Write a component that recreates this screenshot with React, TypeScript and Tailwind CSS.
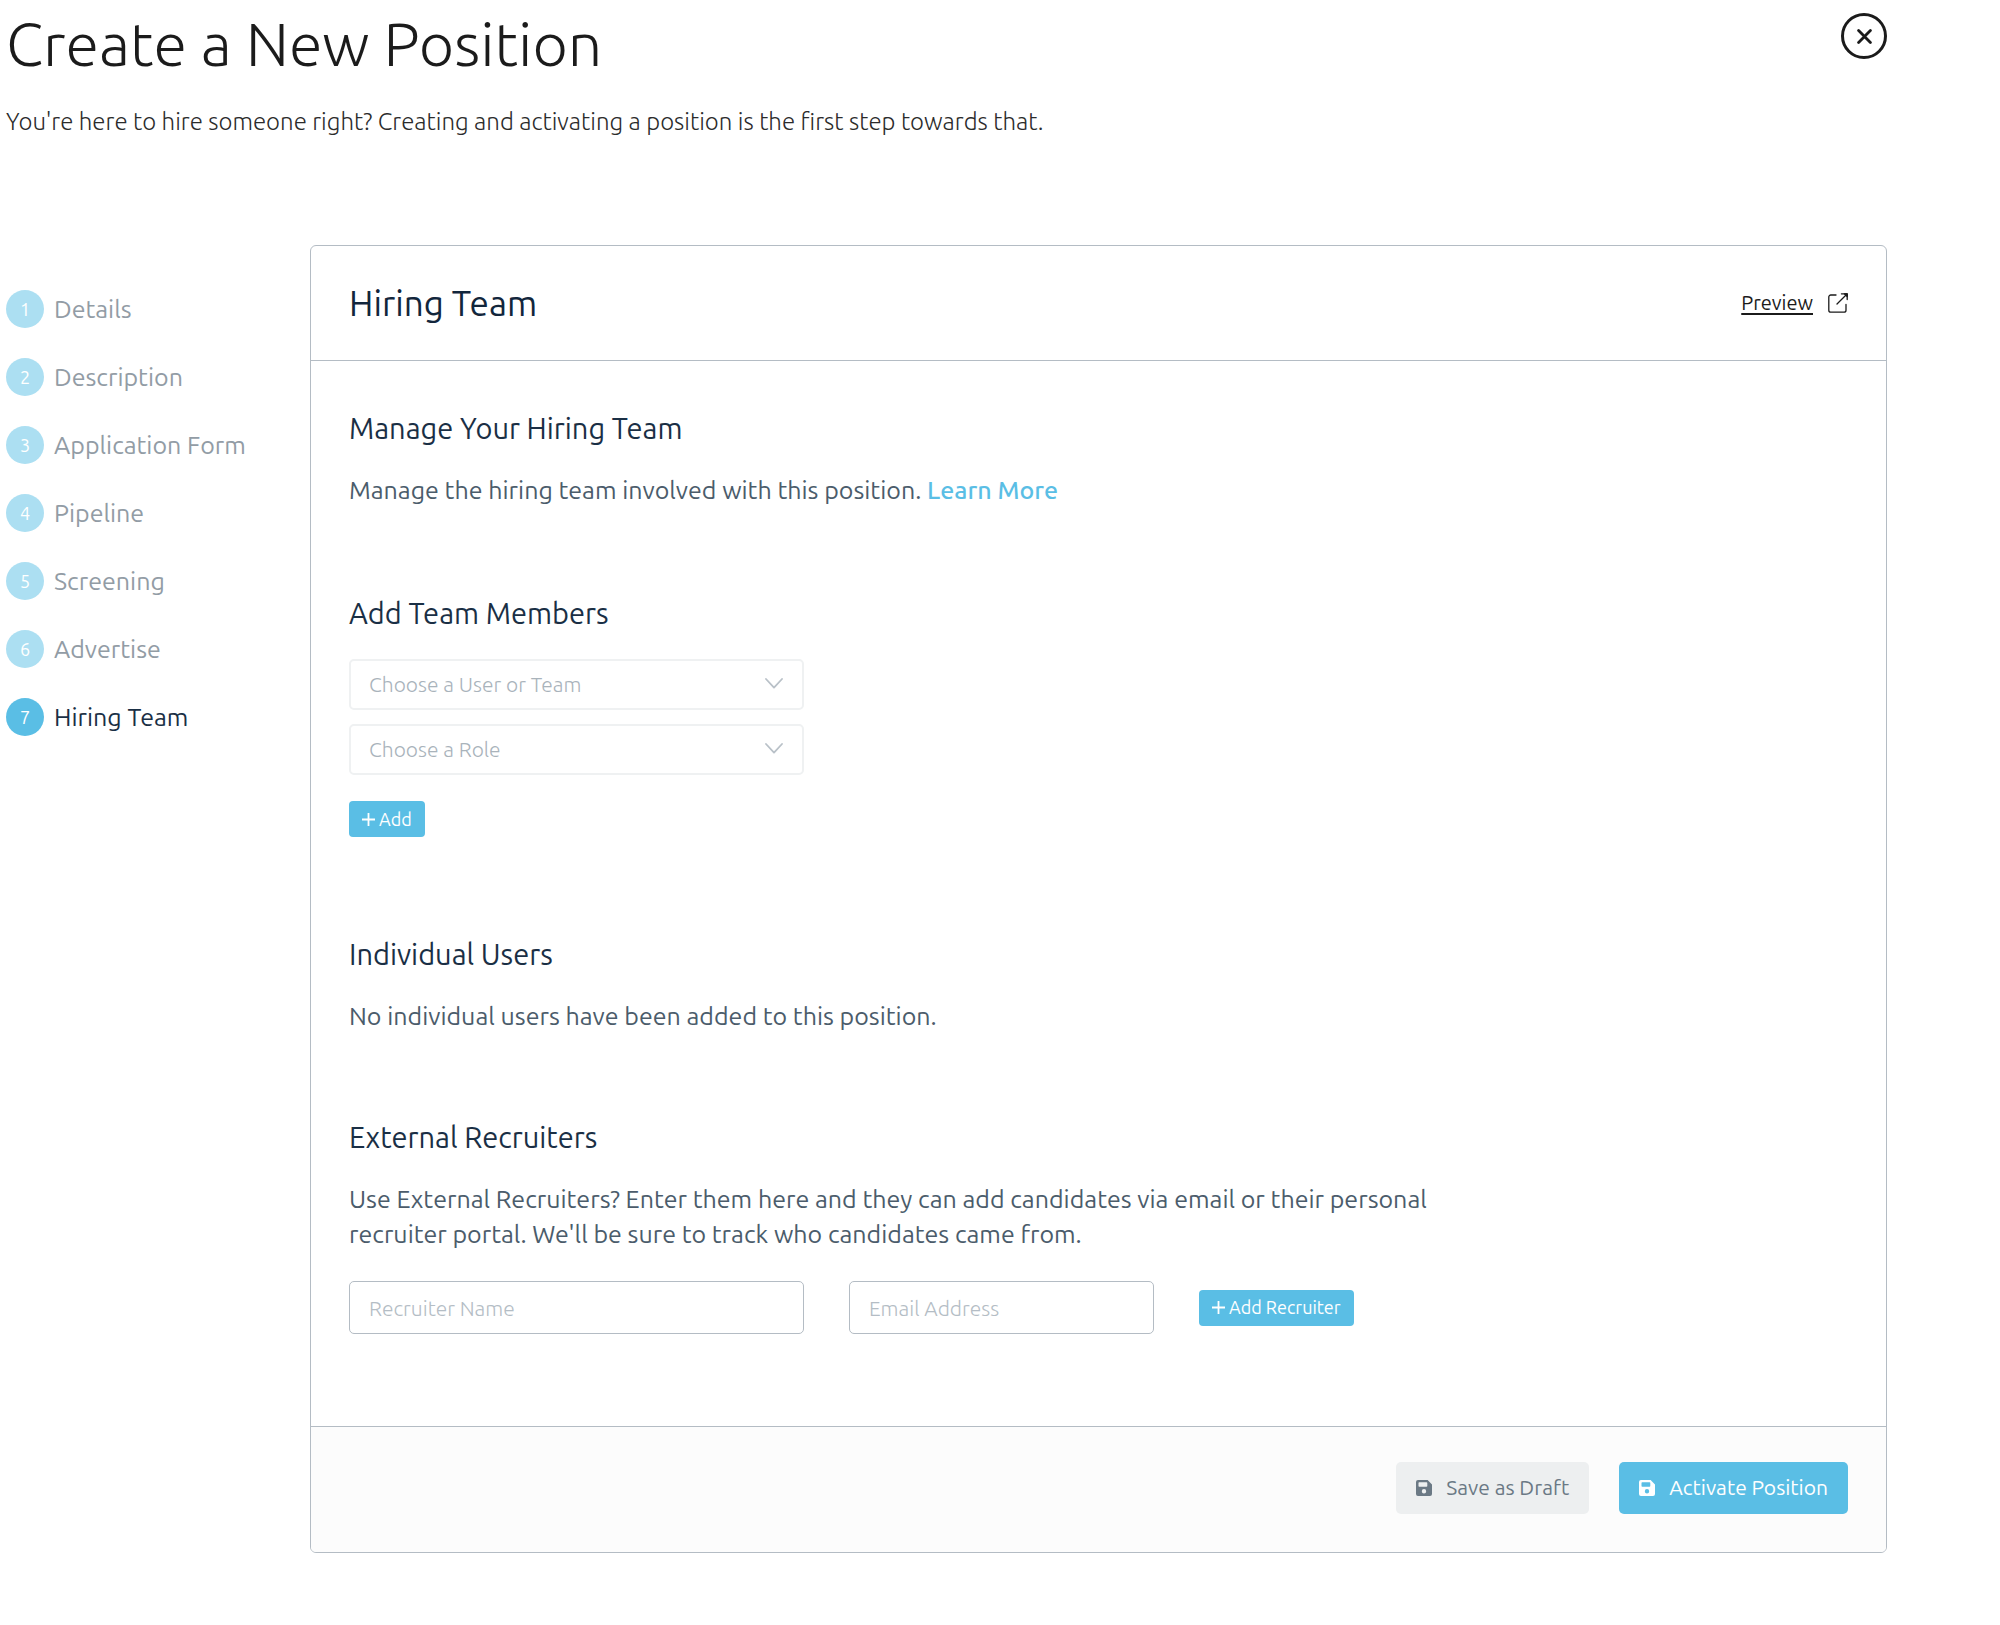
// src/pages/CreatePosition.tsx
import React, { useState } from 'react';

interface Step {
  id: number;
  label: string;
}

interface SelectFieldProps {
  id: string;
  label: string;
  options: string[];
}

interface SectionProps {
  title: string;
  className?: string;
  children: React.ReactNode;
}

const steps: Step[] = [
  { id: 1, label: 'Details' },
  { id: 2, label: 'Description' },
  { id: 3, label: 'Application Form' },
  { id: 4, label: 'Pipeline' },
  { id: 5, label: 'Screening' },
  { id: 6, label: 'Advertise' },
  { id: 7, label: 'Hiring Team' },
];

const CloseIcon: React.FC = () => (
  <svg className="size-[15px]" viewBox="0 0 15 15" fill="none" stroke="currentColor" strokeWidth="2.8" strokeLinecap="round" aria-hidden="true">
    <path d="M1.6 1.6l11.8 11.8M13.4 1.6L1.6 13.4" />
  </svg>
);

const PreviewIcon: React.FC = () => (
  <svg className="size-5" viewBox="0 0 20 20" fill="none" stroke="currentColor" strokeWidth="1.3" strokeLinecap="round" strokeLinejoin="round" aria-hidden="true">
    <path d="M8 2H2.8a2 2 0 0 0-2 2v13.2a2 2 0 0 0 2 2H16a2 2 0 0 0 2-2V11.5" />
    <path d="M9 11L18.8 1.2" />
    <path d="M13.4 0.8H19.2V6.6" />
    <path d="M16.4 0.8H19.2V3.6z" fill="currentColor" />
  </svg>
);

const ChevronIcon: React.FC = () => (
  <svg className="pointer-events-none absolute top-[19px] right-[21px] h-[11px] w-[18px]" viewBox="0 0 18 11" fill="none" stroke="#b9c1c8" strokeWidth="1.8" strokeLinecap="round" strokeLinejoin="round" aria-hidden="true">
    <path d="M1 1l8 8.6L17 1" />
  </svg>
);

const PlusIcon: React.FC = () => (
  <svg className="size-[13px]" viewBox="0 0 13 13" fill="none" stroke="currentColor" strokeWidth="1.8" aria-hidden="true">
    <path d="M6.5 0v13M0 6.5h13" />
  </svg>
);

const SaveIcon: React.FC = () => (
  <svg className="size-4" viewBox="0 0 16 16" fill="currentColor" fillRule="evenodd" aria-hidden="true">
    <path d="M2 0H11.6L16 4.4V14a2 2 0 0 1-2 2H2a2 2 0 0 1-2-2V2a2 2 0 0 1 2-2zM3.2 2.3A.7.7 0 0 0 2.5 3V6A.7.7 0 0 0 3.2 6.7H10.6A.7.7 0 0 0 11.3 6V3A.7.7 0 0 0 10.6 2.3zM8 9.1a2.2 2.2 0 1 0 0 4.4a2.2 2.2 0 0 0 0-4.4z" />
  </svg>
);

const SelectField: React.FC<SelectFieldProps> = ({ id, label, options }) => {
  const [value, setValue] = useState('');

  return (
    <div className="relative">
      <select
        id={id}
        aria-label={label}
        value={value}
        onChange={(e) => setValue(e.target.value)}
        className="block h-[51px] w-full appearance-none rounded-[5px] border-2 border-[#eff1f2] bg-white pl-[18px] pr-12 text-[21px] font-light text-[#a9b3bb]"
      >
        <option value="">{label}</option>
        {options.map((option) => (
          <option key={option} value={option}>
            {option}
          </option>
        ))}
      </select>
      <ChevronIcon />
    </div>
  );
};

const Section: React.FC<SectionProps> = ({ title, className, children }) => (
  <section className={className}>
    <h3 className="text-[29px] leading-9 text-[#1a2f45]">{title}</h3>
    {children}
  </section>
);

const AddButton: React.FC<{ label: string }> = ({ label }) => (
  <button type="button" className="flex h-9 items-center gap-1 rounded-[4px] bg-[#5abee5] px-[13px] text-[18px] whitespace-nowrap text-white">
    <PlusIcon />
    {label}
  </button>
);

const App: React.FC = () => {
  const [current, setCurrent] = useState(7);

  return (
    <div className="bg-white pt-2 pr-[113px] pb-[72px] pl-[6px] font-['Ubuntu','Open_Sans',sans-serif]">
      <header className="flex items-start justify-between">
        <div>
          <h1 className="text-[61px] leading-[72px] font-light text-[#1b1b1b]">Create a New Position</h1>
          <p className="mt-6 text-[24px] leading-9 font-light text-[#2b2b2b]">
            You're here to hire someone right? Creating and activating a position is the first step towards that.
          </p>
        </div>
        <button
          type="button"
          aria-label="Close"
          className="mt-[5px] flex size-[46px] items-center justify-center rounded-full border-3 border-[#1b1b1b] text-[#1b1b1b]"
        >
          <CloseIcon />
        </button>
      </header>

      <div className="mt-[105px] flex items-start">
        <nav className="w-[304px] shrink-0 pt-[45px]">
          <ol className="flex flex-col gap-[30px]">
            {steps.map((step) => (
              <li key={step.id}>
                <a
                  href={`#step-${step.id}`}
                  onClick={() => setCurrent(step.id)}
                  className={`flex items-center gap-[10px] text-[25px] leading-[38px] ${step.id === current ? 'text-[#1a2f45]' : 'text-[#929ca5]'}`}
                >
                  <span
                    className={`flex size-[38px] items-center justify-center rounded-full text-[18px] text-white ${step.id === current ? 'bg-[#5abee5]' : 'bg-[#acdff2]'}`}
                  >
                    {step.id}
                  </span>
                  {step.label}
                </a>
              </li>
            ))}
          </ol>
        </nav>

        <main className="min-w-0 flex-1 overflow-hidden rounded-[6px] border border-[#b4bcc4]">
          <div className="flex h-[114px] items-center justify-between px-[38px]">
            <h2 className="text-[35px] leading-10 text-[#12263c]">Hiring Team</h2>
            <a href="#preview" className="flex items-center gap-[15px] text-[#1b1b1b]">
              <span className="text-[20px] underline underline-offset-3">Preview</span>
              <PreviewIcon />
            </a>
          </div>

          <div className="border-y border-[#b4bcc4] px-[38px] pt-[49px] pb-[92px] text-[25px] leading-[35px] text-[#4b5c6b]">
            <Section title="Manage Your Hiring Team">
              <p className="mt-[27px]">
                Manage the hiring team involved with this position.{' '}
                <a href="#learn-more" className="font-medium text-[#5abee5]">
                  Learn More
                </a>
              </p>
            </Section>

            <Section title="Add Team Members" className="mt-[87px]">
              <div className="mt-[28px] flex w-[455px] flex-col gap-[14px]">
                <SelectField id="user" label="Choose a User or Team" options={['User', 'Team']} />
                <SelectField id="role" label="Choose a Role" options={['Admin', 'Member']} />
              </div>
              <div className="mt-[26px] flex">
                <AddButton label="Add" />
              </div>
            </Section>

            <Section title="Individual Users" className="mt-[99px]">
              <p className="mt-[27px]">No individual users have been added to this position.</p>
            </Section>

            <Section title="External Recruiters" className="mt-[85px]">
              <p className="mt-[27px] max-w-[1100px]">
                Use External Recruiters? Enter them here and they can add candidates via email or their personal recruiter portal.
                We'll be sure to track who candidates came from.
              </p>
              <form className="mt-[29px] flex items-center gap-[45px]" onSubmit={(e) => e.preventDefault()}>
                <input
                  type="text"
                  aria-label="Recruiter Name"
                  placeholder="Recruiter Name"
                  className="h-[53px] w-[455px] rounded-[5px] border border-[#b4bcc4] px-[19px] text-[21px] font-light placeholder:text-[#b4bdc5]"
                />
                <input
                  type="email"
                  aria-label="Email Address"
                  placeholder="Email Address"
                  className="h-[53px] w-[305px] rounded-[5px] border border-[#b4bcc4] px-[19px] text-[21px] font-light placeholder:text-[#b4bdc5]"
                />
                <AddButton label="Add Recruiter" />
              </form>
            </Section>
          </div>

          <div className="flex h-[125px] items-center justify-end gap-[30px] bg-[#fcfcfc] px-[38px] pb-[3px]">
            <button type="button" className="flex h-[52px] items-center gap-[14px] rounded-[5px] bg-[#edeff0] px-5 text-[21px] text-[#6b7985]">
              <SaveIcon />
              Save as Draft
            </button>
            <button type="button" className="flex h-[52px] items-center gap-[14px] rounded-[5px] bg-[#5abee5] px-5 text-[21px] text-white">
              <SaveIcon />
              Activate Position
            </button>
          </div>
        </main>
      </div>
    </div>
  );
};

export default App;
